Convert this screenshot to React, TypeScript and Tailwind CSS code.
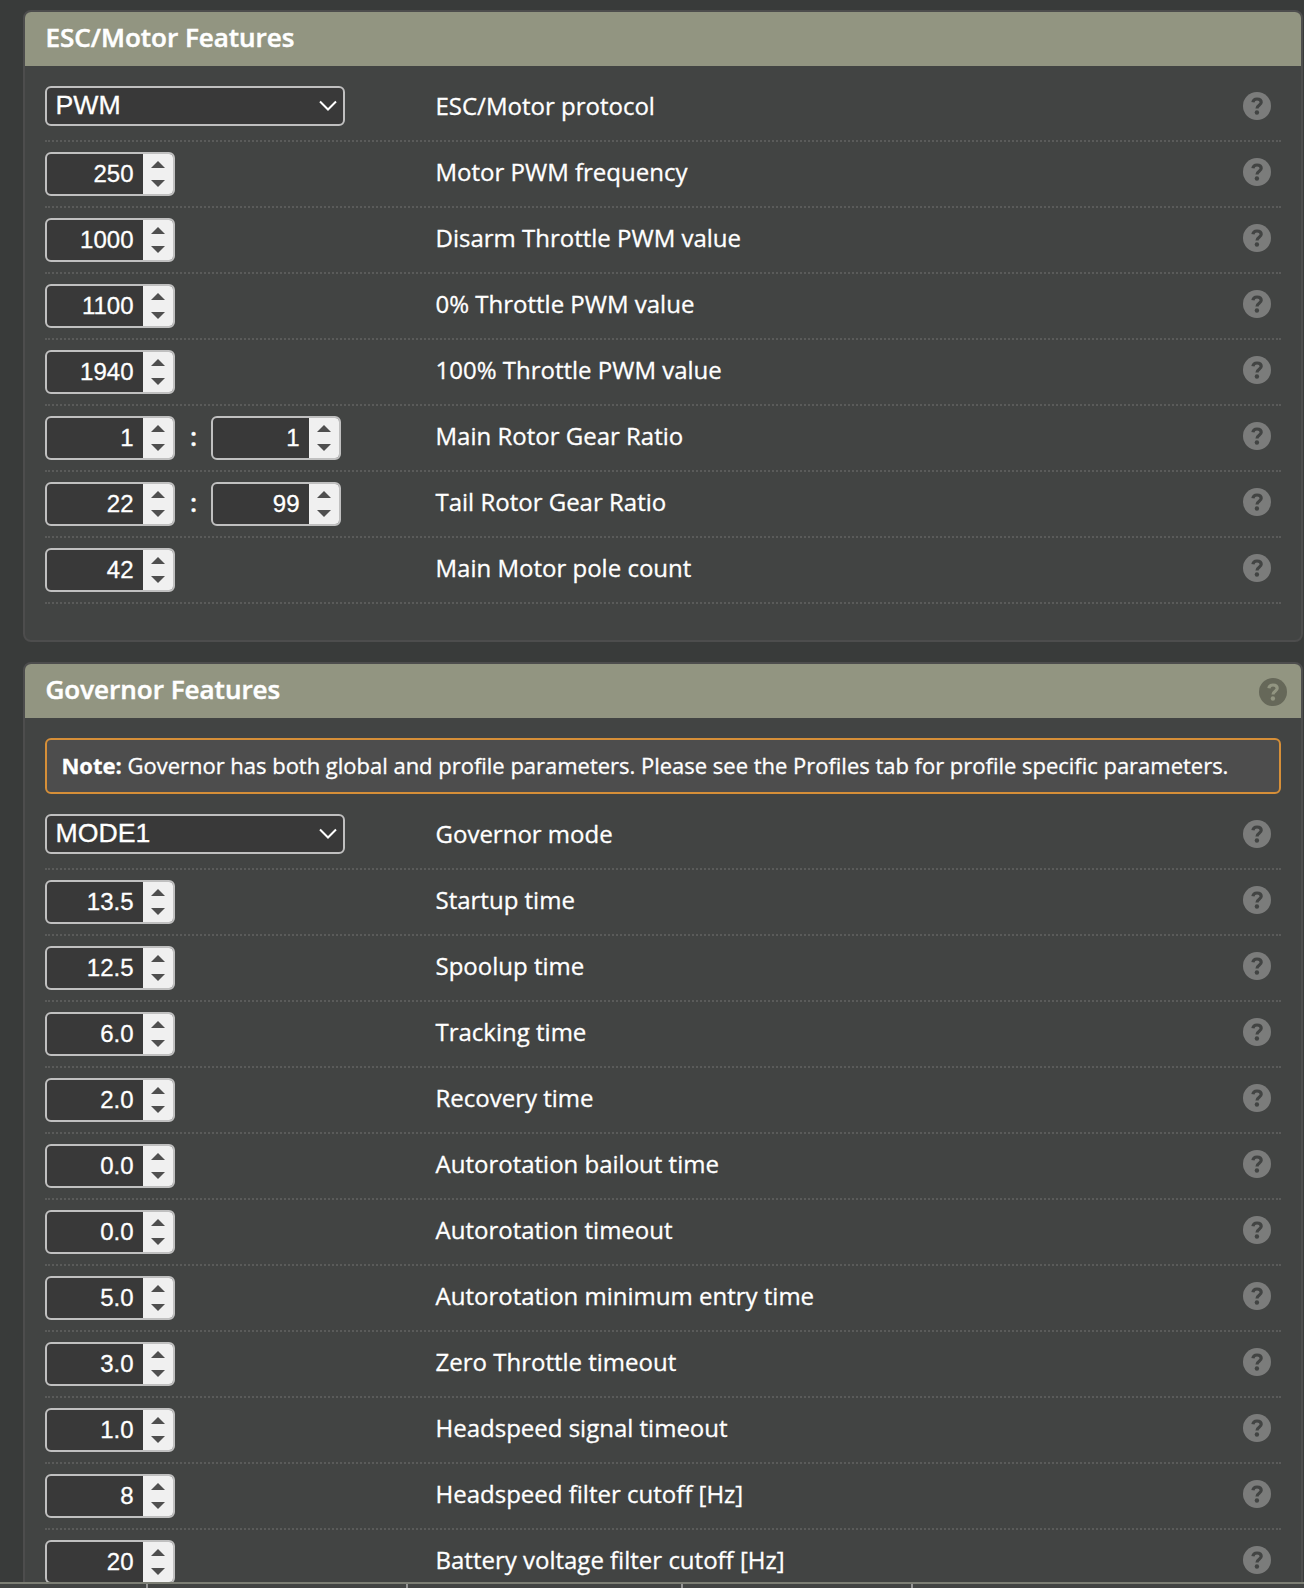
import React from "react";

type Row = { label: string; values: string[]; select?: boolean };

const escRows: Row[] = [
  { label: "ESC/Motor protocol", values: ["PWM"], select: true },
  { label: "Motor PWM frequency", values: ["250"] },
  { label: "Disarm Throttle PWM value", values: ["1000"] },
  { label: "0% Throttle PWM value", values: ["1100"] },
  { label: "100% Throttle PWM value", values: ["1940"] },
  { label: "Main Rotor Gear Ratio", values: ["1", "1"] },
  { label: "Tail Rotor Gear Ratio", values: ["22", "99"] },
  { label: "Main Motor pole count", values: ["42"] },
];

const governorRows: Row[] = [
  { label: "Governor mode", values: ["MODE1"], select: true },
  { label: "Startup time", values: ["13.5"] },
  { label: "Spoolup time", values: ["12.5"] },
  { label: "Tracking time", values: ["6.0"] },
  { label: "Recovery time", values: ["2.0"] },
  { label: "Autorotation bailout time", values: ["0.0"] },
  { label: "Autorotation timeout", values: ["0.0"] },
  { label: "Autorotation minimum entry time", values: ["5.0"] },
  { label: "Zero Throttle timeout", values: ["3.0"] },
  { label: "Headspeed signal timeout", values: ["1.0"] },
  { label: "Headspeed filter cutoff [Hz]", values: ["8"] },
  { label: "Battery voltage filter cutoff [Hz]", values: ["20"] },
];

function HelpIcon({ className }: { className: string }) {
  return (
    <svg viewBox="0 0 28 28" className={`size-7 shrink-0 ${className}`}>
      <circle cx="14" cy="14" r="14" fill="currentColor" />
      <path
        d="M9.900 10.300C10.200 8 11.800 7 14 7c2.400 0 4.200 1.200 4.200 3.300 0 3-4.200 3-4.200 6.200"
        fill="none"
        className="stroke-(--mark)"
        strokeWidth="3.2"
      />
      <circle cx="13.900" cy="20.500" r="2.200" className="fill-(--mark)" />
    </svg>
  );
}

function SelectBox({ value }: { value: string }) {
  return (
    <div className="flex h-10 w-[300px] items-center justify-between rounded-[6px] border-2 border-[#c0c0c0] bg-[#393939] pr-1.5 pl-[8.5px] font-['Liberation_Sans',sans-serif] text-[26.67px] leading-none text-white">
      <span className="-mt-px">{value}</span>
      <svg viewBox="0 0 18 12" className="h-3 w-[18px]" fill="none" stroke="white" strokeWidth="2">
        <path d="M1 1.500l8 8 8-8" />
      </svg>
    </div>
  );
}

function NumberBox({ value }: { value: string }) {
  return (
    <div className="flex h-11 w-[130px] overflow-hidden rounded-[6px] border-2 border-[#c0c0c0] bg-[#393939] font-['Liberation_Sans',sans-serif] text-2xl leading-10 text-white">
      <span className="flex-1 pr-[9.5px] text-right">{value}</span>
      <span className="flex w-[30px] flex-col items-center justify-center gap-3 bg-[#f0f0f0] text-[#4f4f4f]">
        <svg viewBox="0 0 14 7" className="h-[7px] w-3.5" fill="currentColor">
          <path d="M0 7L7 0l7 7z" />
        </svg>
        <svg viewBox="0 0 14 7" className="h-[7px] w-3.5" fill="currentColor">
          <path d="M0 0l7 7 7-7z" />
        </svg>
      </span>
    </div>
  );
}

function SettingRow({ row }: { row: Row }) {
  return (
    <div className="flex h-[66px] items-start border-b-2 border-dotted border-[#5a5b5a] pt-2.5">
      <div className="flex w-[390.5px] shrink-0 items-center">
        {row.select ? (
          <SelectBox value={row.values[0]} />
        ) : (
          row.values.map((value, i) => (
            <React.Fragment key={i}>
              {i > 0 && <span className="-mt-1 w-9 pl-px text-center text-[26px] leading-10 font-semibold">:</span>}
              <NumberBox value={value} />
            </React.Fragment>
          ))
        )}
      </div>
      <div className="flex-1 text-2xl leading-10">{row.label}</div>
      <div className="flex h-10 items-center pr-2.5">
        <HelpIcon className="text-[#7b7c7b] [--mark:#424443]" />
      </div>
    </div>
  );
}

function Panel({ title, help, children }: { title: string; help?: boolean; children: React.ReactNode }) {
  return (
    <section className="w-[1280px] overflow-hidden rounded-lg border-2 border-[#4d4d4d] bg-[#424443]">
      <header className="flex h-[54px] items-center justify-between bg-[#929581] pr-3.5 pl-[20.5px]">
        <h2 className="-mt-1 text-[26px] leading-9 font-semibold [-webkit-text-stroke:0.5px_white]">{title}</h2>
        {help && <HelpIcon className="mt-0.5 text-[#666859] [--mark:#929581]" />}
      </header>
      <div className="px-5 pb-9">{children}</div>
    </section>
  );
}

export default function App() {
  return (
    <div className="flex h-[1588px] w-[1304px] flex-col overflow-hidden bg-[#393b3a] font-['Open_Sans',sans-serif] text-white [-webkit-text-stroke:0.3px_white]">
      <main className="flex h-[1582px] shrink-0 flex-col gap-5 overflow-hidden pt-2.5 pl-[23px]">
        <div className="shrink-0">
          <Panel title="ESC/Motor Features">
            <div className="pt-2.5">
              {escRows.map((row) => (
                <SettingRow key={row.label} row={row} />
              ))}
            </div>
          </Panel>
        </div>
        <div className="shrink-0">
          <Panel title="Governor Features" help>
            <div className="mt-5 mb-2.5 flex h-14 items-center rounded-[6px] border-2 border-[#d68f38] bg-[#4d4d4d] pb-0.5 pl-[14.5px] text-[22px] tracking-[-0.015px] whitespace-pre">
              <b>Note:</b> Governor has both global and profile parameters. Please see the Profiles tab for profile specific parameters.
            </div>
            {governorRows.map((row) => (
              <SettingRow key={row.label} row={row} />
            ))}
          </Panel>
        </div>
      </main>
      <footer className="flex h-1.5 shrink-0 border-t-2 border-[#7d7f75] bg-[#424443]">
        <div className="w-[148px] border-r-2 border-[#949494]" />
        <div className="w-[260px] border-r-2 border-[#949494]" />
        <div className="w-[275px] border-r-2 border-[#949494]" />
        <div className="w-[230px] border-r-2 border-[#949494]" />
      </footer>
    </div>
  );
}
